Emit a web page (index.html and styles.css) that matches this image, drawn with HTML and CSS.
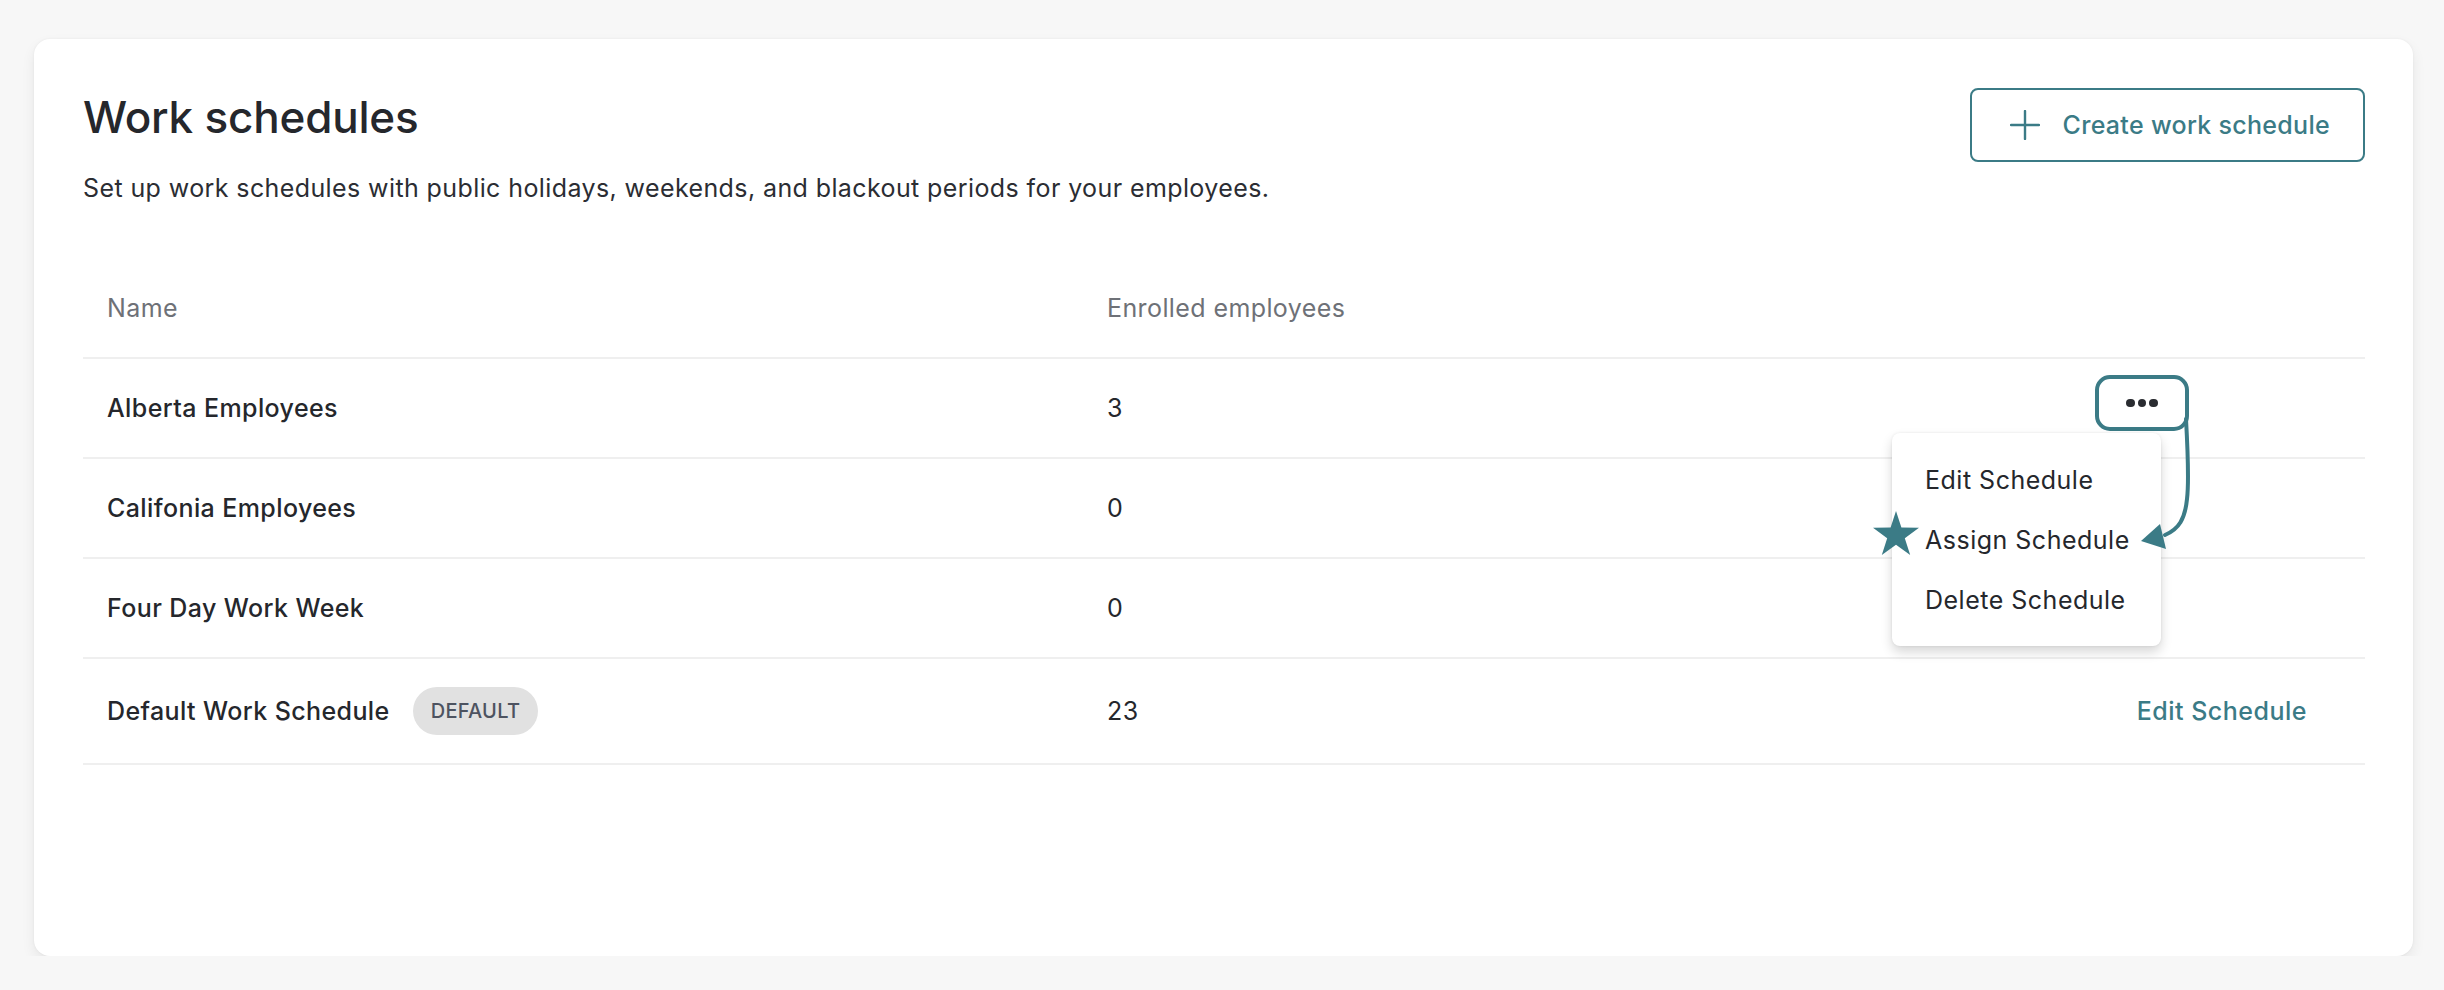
FILE: index.html
```html
<!DOCTYPE html>
<html lang="en">
<head>
<meta charset="utf-8">
<title>Work schedules</title>
<link rel="stylesheet" href="styles.css">
</head>
<body>
<main class="card">
  <header class="page-head">
    <div class="page-intro">
      <h1 class="page-title">Work schedules</h1>
      <p class="page-desc">Set up work schedules with public holidays, weekends, and blackout periods for your employees.</p>
    </div>
    <button class="btn-outline" type="button">
      <svg class="btn-icon" viewBox="0 0 30 30" aria-hidden="true"><path d="M15 1v28M1 15h28" fill="none" stroke="currentColor" stroke-width="2.4" stroke-linecap="round"/></svg>
      <span>Create work schedule</span>
    </button>
  </header>

  <section class="table">
    <div class="row row-head">
      <div class="cell">Name</div>
      <div class="cell">Enrolled employees</div>
      <div class="cell cell-actions"></div>
    </div>

    <div class="row">
      <div class="cell cell-name">Alberta Employees</div>
      <div class="cell">3</div>
      <div class="cell cell-actions">
        <div class="more-wrap">
          <button class="btn-more" type="button" aria-label="More actions">
            <span class="dot"></span><span class="dot"></span><span class="dot"></span>
          </button>
          <svg class="pointer" viewBox="0 0 100 180" aria-hidden="true">
            <path d="M91 44 C 93 80, 94 108, 92 124 C 90 144, 84 154, 70 160" fill="none" stroke="#3b7b86" stroke-width="4" stroke-linecap="round"/>
            <polygon points="46,166 65,149 71,174" fill="#3b7b86"/>
          </svg>
          <ul class="menu">
            <li class="menu-item">Edit Schedule</li>
            <li class="menu-item">Assign Schedule</li>
            <li class="menu-item">Delete Schedule</li>
            <svg class="star" viewBox="0 0 46 44" aria-hidden="true"><polygon points="23,0 28.4,16.6 46,16.8 31.8,27.2 37.2,44 23,33.8 8.8,44 14.2,27.2 0,16.8 17.6,16.6" fill="#3b7b86"/></svg>
          </ul>
        </div>
      </div>
    </div>

    <div class="row">
      <div class="cell cell-name">Califonia Employees</div>
      <div class="cell">0</div>
      <div class="cell cell-actions"></div>
    </div>

    <div class="row">
      <div class="cell cell-name">Four Day Work Week</div>
      <div class="cell">0</div>
      <div class="cell cell-actions"></div>
    </div>

    <div class="row row-last">
      <div class="cell cell-name">Default Work Schedule <span class="badge">Default</span></div>
      <div class="cell">23</div>
      <div class="cell cell-actions"><a class="link" href="#">Edit Schedule</a></div>
    </div>
  </section>
</main>
</body>
</html>
```

FILE: styles.css
```css
* { box-sizing: border-box; }

html, body {
  margin: 0;
  padding: 0;
  background: #f7f7f7;
}

body {
  font-family: "Inter", "Liberation Sans", sans-serif;
  color: #25272c;
  padding: 39px 31px 0 34px;
}

.card {
  background: #fff;
  border-radius: 16px;
  height: 917px;
  padding: 49px 48px 0 49px;
  box-shadow: 0 6px 14px rgba(0, 0, 0, 0.07), 0 0 3px rgba(0, 0, 0, 0.05);
}

/* heading block */
.page-head {
  display: flex;
  justify-content: space-between;
  align-items: flex-start;
}

.page-title {
  margin: 0;
  font-size: 44px;
  line-height: 58px;
  font-weight: 500;
  letter-spacing: -0.2px;
  color: #25272c;
}

.page-desc {
  margin: 26px 0 0;
  font-size: 25px;
  line-height: 32px;
  font-weight: 400;
  letter-spacing: 0.4px;
  color: #2b2d33;
}

.btn-outline {
  display: inline-flex;
  align-items: center;
  gap: 23px;
  height: 74px;
  padding: 0 33px 0 38px;
  border: 2px solid #3b7b86;
  border-radius: 8px;
  background: #fff;
  color: #3b7b86;
  font-family: inherit;
  font-size: 25px;
  font-weight: 500;
  letter-spacing: 0.3px;
  cursor: pointer;
}

.btn-icon {
  width: 30px;
  height: 30px;
}

/* schedule table */
.table {
  margin-top: 60px;
}

.row {
  display: grid;
  grid-template-columns: 1000px 1fr 400px;
  align-items: center;
  min-height: 100px;
  padding: 0 0 0 24px;
  border-bottom: 2px solid #efefef;
  font-size: 25px;
  line-height: 32px;
  letter-spacing: 0.4px;
}

.row-head {
  min-height: 0;
  padding-top: 28px;
  padding-bottom: 33px;
  color: #6e7177;
}

.row-last {
  min-height: 106px;
}

.cell-name {
  font-weight: 500;
  display: flex;
  align-items: center;
  gap: 23px;
}

.cell-actions {
  display: flex;
  justify-content: flex-end;
  padding-right: 58px;
}

.badge {
  display: inline-flex;
  align-items: center;
  justify-content: center;
  height: 48px;
  padding: 0 18px;
  border-radius: 24px;
  background: #e1e1e1;
  color: #4d5360;
  font-size: 20px;
  font-weight: 500;
  letter-spacing: 0.3px;
  text-transform: uppercase;
}

.link {
  color: #3b7b86;
  font-size: 25px;
  font-weight: 500;
  letter-spacing: 0.5px;
  text-decoration: none;
}

/* row action menu */
.more-wrap {
  position: relative;
  margin-right: 118px;
  margin-bottom: 10px;
}

.btn-more {
  display: flex;
  align-items: center;
  justify-content: center;
  gap: 3px;
  width: 94px;
  height: 56px;
  border: 4px solid #3b7b86;
  border-radius: 15px;
  background: #fff;
  cursor: pointer;
  padding: 0;
}

.dot {
  width: 8.5px;
  height: 8.5px;
  border-radius: 50%;
  background: #2a2c31;
}

.pointer {
  position: absolute;
  left: 0;
  top: 0;
  width: 100px;
  height: 180px;
  overflow: visible;
  z-index: 3;
  pointer-events: none;
}

.menu {
  position: absolute;
  top: 58px;
  right: 28px;
  width: 269px;
  margin: 0;
  padding: 17px 0 16px 33px;
  list-style: none;
  background: #fff;
  border-radius: 8px;
  box-shadow: 0 6px 12px rgba(0, 0, 0, 0.16), 0 0 3px rgba(0, 0, 0, 0.08);
  z-index: 2;
}

.menu-item {
  height: 60px;
  display: flex;
  align-items: center;
  font-size: 25px;
  letter-spacing: 0.5px;
  color: #25272c;
  white-space: nowrap;
}

.star {
  position: absolute;
  left: -19px;
  top: 78px;
  width: 46px;
  height: 44px;
}
```
